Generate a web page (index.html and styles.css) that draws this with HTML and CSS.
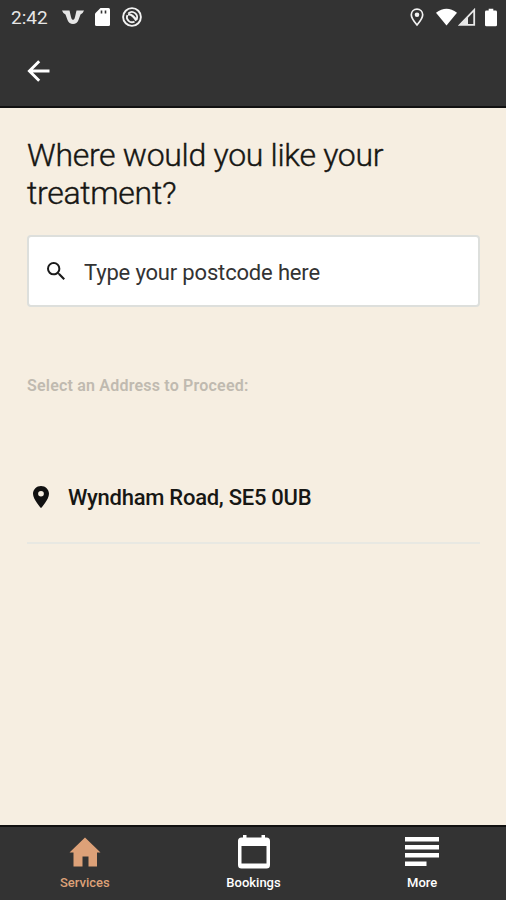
FILE: index.html
```html
<!DOCTYPE html>
<html lang="en">

<head>
    <meta charset="UTF-8">
    <meta name="viewport" content="width=device-width, initial-scale=1.0">
    <title>Choose Address</title>
    <link rel="stylesheet" href="styles.css">
</head>

<body>
    <div class="app">
        <header class="header">
            <div class="status-bar">
                <span class="time">2:42</span>
                <svg class="status-wings" width="22" height="16" viewBox="0 0 22 16">
                    <path d="M0 1.500h7.500l1.500 6.500q.5 3 2 3t2-3l1.500-6.500H22q-1 3-3.500 4l-2 5.500Q15 15 11 15T5.500 11l-2-5.500Q1 4.500 0 1.500z" fill="#e6e6e6" />
                </svg>
                <svg class="status-card" width="15" height="18" viewBox="0 0 15 18">
                    <path d="M5.500 0H13.500Q15 0 15 1.500V16.500Q15 18 13.500 18H1.500Q0 18 0 16.500V5.500z" fill="#fff" />
                    <path d="M6.500 2.500v3M10.500 2.500v3" stroke="#333" stroke-width="1.600" />
                </svg>
                <svg class="status-sync" width="20" height="20" viewBox="0 0 20 20" fill="none" stroke="#f2f2f2">
                    <circle cx="10" cy="10" r="8.900" stroke-width="1.900" />
                    <path d="M14.500 12.500A5.200 5.200 0 0 0 6.500 6.200M5.300 8A5.200 5.200 0 0 0 12.500 14.600" stroke-width="1.800" />
                    <path d="M6 7.500q4-1 8.500 6" stroke-width="2.400" />
                </svg>
                <div class="status-right">
                    <svg width="14" height="19" viewBox="0 0 14 19">
                        <path d="M7 1.200C3.800 1.200 1.300 3.600 1.300 6.800 1.300 10.500 7 17 7 17s5.700-6.500 5.700-10.200C12.700 3.600 10.200 1.200 7 1.200z" fill="none" stroke="#f2f2f2" stroke-width="1.700" />
                        <circle cx="7" cy="6.800" r="2.300" fill="#f2f2f2" />
                    </svg>
                    <svg class="status-wifi" width="21" height="18" viewBox="0 0 22 18">
                        <path d="M0 4.500Q11-4 22 4.500L11 18z" fill="#fff" />
                    </svg>
                    <svg class="status-signal" width="18" height="18" viewBox="0 0 18 18">
                        <path d="M16.200 2v14.800H2z" fill="none" stroke="#e8e8e8" stroke-width="1.800" />
                        <path d="M3 16.500L10 9v7.500z" fill="#e8e8e8" />
                    </svg>
                    <svg class="status-battery" width="12" height="19" viewBox="0 0 13 19">
                        <path d="M4 0h5v2h2.500Q13 2 13 3.500v14Q13 19 11.500 19h-10Q0 19 0 17.500v-14Q0 2 1.500 2H4z" fill="#fff" />
                    </svg>
                </div>
            </div>
            <button class="back" type="button" aria-label="Back">
                <svg width="24" height="22" viewBox="0 0 24 22" fill="none" stroke="#fff" stroke-width="2.900">
                    <path d="M22.500 11H2.500M12.200 1.200L2.400 11l9.800 9.800" />
                </svg>
            </button>
        </header>

        <main class="content">
            <h1 class="title">Where would you like your treatment?</h1>
            <label class="search">
                <svg class="search-icon" width="18" height="18" viewBox="3 3 17.500 17.500">
                    <path d="M15.500 14h-.79l-.28-.27A6.470 6.470 0 0 0 16 9.500 6.500 6.500 0 1 0 9.500 16c1.610 0 3.090-.59 4.230-1.570l.27.28v.79l5 4.990L20.490 19l-4.990-5zm-6 0C7.010 14 5 11.990 5 9.500S7.010 5 9.500 5 14 7.010 14 9.500 11.990 14 9.500 14z" fill="#1a1a1a" />
                </svg>
                <input class="search-input" type="text" placeholder="Type your postcode here">
            </label>
            <p class="hint">Select an Address to Proceed:</p>
            <div class="address">
                <svg class="address-pin" width="16" height="22" viewBox="5 2 14 20" preserveAspectRatio="none">
                    <path d="M12 2C8.130 2 5 5.130 5 9c0 5.250 7 13 7 13s7-7.750 7-13c0-3.870-3.130-7-7-7zm0 9.500a2.500 2.500 0 0 1 0-5 2.500 2.500 0 0 1 0 5z" fill="#111" />
                </svg>
                <span>Wyndham Road, SE5 0UB</span>
            </div>
        </main>

        <nav class="tabs">
            <a class="tab active">
                <svg width="34" height="34" viewBox="0 0 34 34">
                    <path d="M17 2.500L32.500 17.500H29v14H20.500V21.500h-6v10H5.500V17.500H1.500z" fill="currentColor" />
                </svg>
                <span>Services</span>
            </a>
            <a class="tab">
                <svg width="34" height="34" viewBox="0 0 34 34">
                    <path d="M6 0h3.500v2.500h15V0H28v2.500h1.500Q33 2.500 33 6v24Q33 33.500 29.500 33.500h-25Q1 33.500 1 30v-24Q1 2.500 4.500 2.500H6zM4.500 11v17.500h25v-17.500z" fill="currentColor" fill-rule="evenodd" />
                </svg>
                <span>Bookings</span>
            </a>
            <a class="tab">
                <svg width="34" height="34" viewBox="0 0 34 34">
                    <path d="M0 2h34v4.500H0zM0 10h34v4.500H0zM0 18h34v4.500H0zM0 26.500h21.500v4.500H0z" fill="currentColor" />
                </svg>
                <span>More</span>
            </a>
        </nav>
    </div>
</body>

</html>
```

FILE: styles.css
```css
* {
    box-sizing: border-box;
}

body {
    margin: 0;
    font-family: Roboto, sans-serif;
    background-color: #f6eee1;
    color: #171714;
}

.app {
    display: flex;
    flex-direction: column;
    height: 100vh;
}

/* Header */
.header {
    height: 108px;
    background-color: #333333;
    border-bottom: 2px solid #111111;
}

.status-bar {
    display: flex;
    align-items: center;
    height: 34px;
    padding: 0 9px 0 11px;
}

.time {
    width: 51px;
    font-size: 19px;
    color: #e6e6e6;
}

.status-card {
    margin-left: 11px;
}

.status-sync {
    margin-left: 12px;
}

.status-right {
    display: flex;
    align-items: center;
    margin-left: auto;
}

.status-wifi {
    margin-left: 12px;
}

.status-signal {
    margin-left: 1px;
}

.status-battery {
    margin-left: 9px;
}

.back {
    display: block;
    margin: 26px 0 0 27px;
    padding: 0;
    border: none;
    background: none;
    line-height: 0;
}

/* Content */
.content {
    flex: 1;
    padding: 28px 26px 0 27px;
}

.title {
    margin: 0 0 23px;
    font-size: 32px;
    font-weight: 300;
    line-height: 38px;
    letter-spacing: -0.3px;
    -webkit-text-stroke: 0.4px #171714;
}

.search {
    display: flex;
    align-items: center;
    height: 72px;
    padding: 0 18px;
    background-color: #ffffff;
    border: 2px solid #dddfdc;
    border-radius: 4px;
}

.search-input {
    flex: 1;
    margin-left: 19px;
    padding: 2px 0 0;
    border: none;
    outline: none;
    font-family: inherit;
    font-size: 22px;
    letter-spacing: -0.17px;
}

.search-input::placeholder {
    color: #333333;
}

.hint {
    margin: 69px 0 0;
    font-size: 16px;
    font-weight: 600;
    line-height: 20px;
    letter-spacing: 0.2px;
    color: #c0bab0;
}

.address {
    display: flex;
    align-items: center;
    height: 94px;
    margin-top: 54px;
    padding-left: 6px;
    border-bottom: 2px solid #e8e8e2;
    font-size: 22px;
    font-weight: 500;
    letter-spacing: -0.27px;
}

.address span {
    padding-top: 2px;
}

.address-pin {
    position: relative;
    top: 1px;
    margin-right: 19px;
}

/* Bottom tabs */
.tabs {
    display: flex;
    height: 75px;
    background-color: #333333;
    border-top: 2px solid #111111;
}

.tab {
    flex: 1;
    display: flex;
    flex-direction: column;
    align-items: center;
    padding: 8px 0 0 1px;
    font-size: 13px;
    font-weight: 500;
    line-height: 16px;
    color: #ffffff;
}

.tab span {
    margin-top: 6px;
}

.tab.active {
    color: #dda178;
}
```
